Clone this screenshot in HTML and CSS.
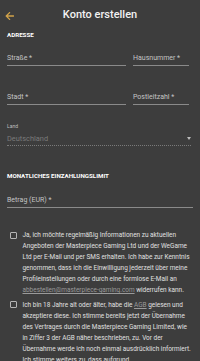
FILE: index.html
```html
<!DOCTYPE html>
<html lang="de">
<head>
<meta charset="utf-8">
<title>Konto erstellen</title>
<link rel="stylesheet" href="styles.css">
</head>
<body>
<header class="topbar">
  <span class="back">
    <svg width="9" height="8" viewBox="0 0 9 8"><path d="M8.5 4H1.2M4.6 0.6L1.2 4L4.6 7.4" fill="none" stroke="#d1a24a" stroke-width="1.3" stroke-linecap="round" stroke-linejoin="round"/></svg>
  </span>
  <h1 class="title">Konto erstellen</h1>
  <span></span>
</header>
<main class="content">
  <h2 class="section s-addr">ADRESSE</h2>
  <div class="row r1">
    <div class="field grow">Straße *</div>
    <div class="field small">Hausnummer *</div>
  </div>
  <div class="row r2">
    <div class="field grow">Stadt *</div>
    <div class="field small">Postleitzahl *</div>
  </div>
  <div class="select">
    <div class="sel-label">Land</div>
    <div class="sel-value"><span>Deutschland</span><span class="caret"></span></div>
  </div>
  <h2 class="section s-limit">MONATLICHES EINZAHLUNGSLIMIT</h2>
  <div class="field full">Betrag (EUR) *</div>
  <div class="check c1">
    <span class="box"></span>
    <p>Ja, ich möchte regelmäßig Informationen zu aktuellen Angeboten der Masterpiece Gaming Ltd und der WeGame Ltd per E-Mail und per SMS erhalten. Ich habe zur Kenntnis genommen, dass ich die Einwilligung jederzeit über meine Profileinstellungen oder durch eine formlose E-Mail an <a href="#">abbestellen@masterpiece-gaming.com</a> widerrufen kann.</p>
  </div>
  <div class="check c2">
    <span class="box"></span>
    <p>Ich bin 18 Jahre alt oder älter, habe die <a href="#">AGB</a> gelesen und akzeptiere diese. Ich stimme bereits jetzt der Übernahme des Vertrages durch die Masterpiece Gaming Limited, wie in Ziffer 3 der AGB näher beschrieben, zu. Vor der Übernahme werde ich noch einmal ausdrücklich informiert. Ich stimme weiters zu, dass aufgrund</p>
  </div>
</main>
</body>
</html>
```
FILE: styles.css
```css
html, body {
  margin: 0;
  padding: 0;
  background: #3d3d3d;
  font-family: Roboto, "Liberation Sans", sans-serif;
  color: #e6e6e6;
  overflow: hidden;
}
.topbar {
  height: 30px;
  display: grid;
  grid-template-columns: 30px 1fr 30px;
  align-items: center;
}
.back {
  display: flex;
  padding-left: 5px;
  padding-top: 1px;
}
.title {
  margin: 0;
  font-size: 11px;
  font-weight: 500;
  text-align: center;
  color: #f2f2f2;
  line-height: 14px;
}
.content {
  padding: 0 7px;
}
.section {
  margin: 0;
  font-size: 6.2px;
  line-height: 8px;
  font-weight: 700;
  color: #ffffff;
}
.s-addr { margin-top: 1px; }
.s-limit { margin-top: 26px; }
.row {
  display: flex;
  gap: 7px;
}
.r1 { margin-top: 15px; }
.r2 { margin-top: 27px; }
.field {
  font-size: 7px;
  line-height: 9px;
  color: #c4c4c4;
  padding-bottom: 2px;
  border-bottom: 1px solid #8a8a8a;
}
.grow { flex: 1; }
.small { width: 56px; margin-right: 4px; }
.full { margin-top: 16px; margin-right: 0; }
.select {
  margin-top: 18px;
  margin-right: 2px;
}
.sel-label {
  font-size: 5px;
  line-height: 6px;
  color: #bdbdbd;
  margin-bottom: 4.5px;
}
.sel-value {
  display: flex;
  justify-content: space-between;
  align-items: center;
  font-size: 7.4px;
  line-height: 9px;
  color: #7a7a7a;
  padding-bottom: 2.5px;
  border-bottom: 1px dotted #7a7a7a;
}
.caret {
  width: 0;
  height: 0;
  border-left: 2.5px solid transparent;
  border-right: 2.5px solid transparent;
  border-top: 3px solid #bdbdbd;
}
.check {
  display: flex;
  align-items: flex-start;
  gap: 6px;
  padding-left: 2.5px;
}
.c1 { margin-top: 22px; }
.c2 { margin-top: 3.5px; }
.box {
  flex: none;
  width: 5px;
  height: 5px;
  border: 1.5px solid #b5b5b5;
  border-radius: 1px;
  margin-top: 1.5px;
}
.check p {
  margin: 0;
  font-size: 6.45px;
  line-height: 11px;
  color: #e0e0e0;
}
.check a {
  color: #9a9a9a;
  text-decoration: underline;
}
```
